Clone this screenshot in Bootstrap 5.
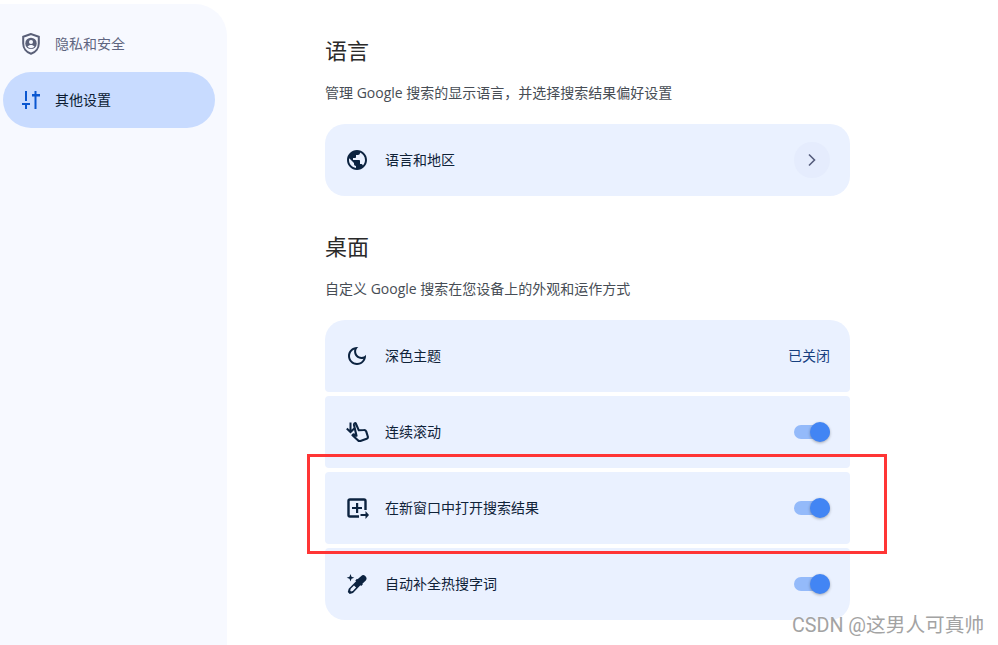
<!DOCTYPE html>
<html lang="zh-CN">
<head>
  <meta charset="UTF-8">
  <meta name="viewport" content="width=device-width, initial-scale=1.0">
  <title>搜索设置</title>
  <link href="https://cdn.jsdelivr.net/npm/bootstrap@5.3.3/dist/css/bootstrap.min.css" rel="stylesheet">
  <style>
    html, body { height: 100%; }
    body {
      font-family: Roboto, "Noto Sans CJK SC", sans-serif;
      font-size: 14px;
      background: #fff;
      color: #1f1f1f;
      overflow: hidden;
    }
    .page-wrap { height: 645px; }
    .side-panel {
      width: 227px;
      margin-top: 4px;
      padding: 12px 12px 0 3px;
      background: #f7f9ff;
      border-top-right-radius: 32px;
    }
    .side-item {
      height: 56px;
      padding-left: 17px;
      gap: 13px;
      border-radius: 28px;
      color: #5f6580;
    }
    .side-item.on { background: #c8dbff; color: #0b1b33; }
    .main-col {
      width: 525px;
      margin-left: 98px;
      padding-top: 37px;
      gap: 37px;
    }
    .sec-title { font-size: 22px; line-height: 30px; font-weight: 400; margin: 0; color: #2a2a2a; }
    .sec-desc {
      font-family: "Open Sans", "Noto Sans CJK SC", sans-serif;
      font-size: 14px;
      line-height: 20px;
      margin: 16px 0 21px;
      color: #474d55;
    }
    .set-row {
      height: 72px;
      padding: 0 20px;
      gap: 16px;
      background: #eaf1ff;
      border-radius: 4px;
      color: #0f2238;
    }
    .set-row.top-end { border-top-left-radius: 20px; border-top-right-radius: 20px; }
    .set-row.bottom-end { border-bottom-left-radius: 20px; border-bottom-right-radius: 20px; }
    .row-stack { gap: 4px; }
    .row-icon { width: 24px; height: 24px; flex: none; fill: #0c2340; }
    .go-btn {
      width: 36px;
      height: 36px;
      border-radius: 50%;
      background: #e5ecfd;
    }
    .state-text { color: #17407f; }
    .switch-track {
      position: relative;
      display: block;
      width: 36px;
      height: 14px;
      border-radius: 7px;
      background: #94bafa;
    }
    .switch-track::after {
      content: "";
      position: absolute;
      right: 0;
      top: -3px;
      width: 20px;
      height: 20px;
      border-radius: 50%;
      background: #4285f4;
      box-shadow: 0 1px 3px rgba(0, 0, 0, .3);
    }
    .red-box {
      position: absolute;
      left: 307px;
      top: 454px;
      width: 580px;
      height: 100px;
      border: 3px solid #ff3535;
      pointer-events: none;
    }
    .watermark {
      position: absolute;
      left: 792px;
      top: 613px;
      font-size: 19.7px;
      line-height: 26px;
      white-space: nowrap;
      color: #a3a3a3;
      text-shadow: 0 0 2px #fff;
    }
  </style>
</head>
<body>
  <div class="page-wrap d-flex position-relative">
    <!-- Sidebar -->
    <nav class="side-panel flex-shrink-0">
      <div class="side-item d-flex align-items-center">
        <svg width="22" height="24" viewBox="0 0 22 24"><path d="M11 2 3.200 4.800v6.700c0 4.800 3.200 8.900 7.800 10.300 4.600-1.400 7.800-5.500 7.800-10.300V4.800z" fill="none" stroke="#5a6078" stroke-width="2"/><circle cx="11" cy="11.400" r="5.700" fill="#5a6078"/><circle cx="11" cy="9.900" r="2" fill="#f7f9ff"/><path d="M7.500 14.800c.8-1.300 2.100-1.900 3.500-1.900s2.700.6 3.500 1.900c-.9.900-2.200 1.400-3.500 1.400s-2.600-.5-3.500-1.400z" fill="#f7f9ff"/></svg>
        <span>隐私和安全</span>
      </div>
      <div class="side-item on d-flex align-items-center">
        <svg width="22" height="24" viewBox="0 0 22 24" fill="#0b57d0"><path d="M5 3h2v10H5zM2 15h8v2H2zM5 17h2v4H5zM14.500 3h2v18h-2zM12 6h8v2.500h-8z"/></svg>
        <span>其他设置</span>
      </div>
    </nav>

    <!-- Settings -->
    <main class="main-col d-flex flex-column">
      <section class="lang-sec">
        <h2 class="sec-title">语言</h2>
        <p class="sec-desc">管理 Google 搜索的显示语言，并选择搜索结果偏好设置</p>
        <div class="set-row top-end bottom-end d-flex align-items-center">
          <svg class="row-icon" viewBox="0 0 24 24"><path d="M12 2C6.480 2 2 6.480 2 12s4.480 10 10 10 10-4.480 10-10S17.520 2 12 2zm-1 17.930c-3.950-.49-7-3.850-7-7.930 0-.62.08-1.210.21-1.790L9 15v1c0 1.100.9 2 2 2v1.930zm6.900-2.540c-.26-.81-1-1.390-1.900-1.390h-1v-3c0-.55-.45-1-1-1H8v-2h2c.55 0 1-.45 1-1V7h2c1.100 0 2-.9 2-2v-.41c2.930 1.190 5 4.060 5 7.410 0 2.080-.8 3.970-2.100 5.390z"/></svg>
          <span class="flex-grow-1">语言和地区</span>
          <span class="go-btn d-flex align-items-center justify-content-center">
            <svg width="12" height="14" viewBox="0 0 12 14"><path d="M3 1.500 8.500 7 3 12.500" fill="none" stroke="#555c7c" stroke-width="1.600"/></svg>
          </span>
        </div>
      </section>

      <section class="desk-sec">
        <h2 class="sec-title">桌面</h2>
        <p class="sec-desc">自定义 Google 搜索在您设备上的外观和运作方式</p>
        <div class="row-stack d-flex flex-column">
          <div class="set-row top-end d-flex align-items-center">
            <svg class="row-icon" viewBox="0 0 24 24"><path d="M9.370 5.510C9.190 6.150 9.100 6.820 9.100 7.500c0 4.080 3.320 7.400 7.400 7.400.68 0 1.350-.09 1.990-.27C17.450 17.190 14.930 19 12 19c-3.860 0-7-3.140-7-7 0-2.930 1.810-5.450 4.370-6.490zM12 3c-4.970 0-9 4.030-9 9s4.030 9 9 9 9-4.030 9-9c0-.46-.04-.92-.1-1.360-.98 1.370-2.580 2.260-4.400 2.260-2.980 0-5.400-2.420-5.400-5.400 0-1.810.89-3.420 2.260-4.400-.44-.06-.9-.1-1.360-.1z"/></svg>
            <span class="flex-grow-1">深色主题</span>
            <span class="state-text">已关闭</span>
          </div>
          <div class="set-row d-flex align-items-center">
            <svg class="row-icon" viewBox="0 0 24 24"><path d="M5.500 2.500v9.500M1.800 8.500 5.500 12.200 9.200 8.500" fill="none" stroke="#0c2340" stroke-width="2"/><path d="M10.800 3.500l3 6.800 5-.3c1.200-.1 2 .4 2.400 1.400l1.600 5.100c.3 1-.1 1.800-1.100 2.200l-6.300 2.200c-1 .3-1.800.1-2.500-.7L7.500 15.200l1-1 3 1.500L9 5c-.2-1.300 1.300-2.400 1.800-1.500z" fill="none" stroke="#0c2340" stroke-width="2.100" stroke-linejoin="round"/></svg>
            <span class="flex-grow-1">连续滚动</span>
            <span class="switch-track"></span>
          </div>
          <div class="set-row d-flex align-items-center">
            <svg class="row-icon" viewBox="0 0 24 24"><path d="M14 20.500H5A1.500 1.500 0 0 1 3.500 19V5A1.500 1.500 0 0 1 5 3.500h14A1.500 1.500 0 0 1 20.500 5v9" fill="none" stroke="#0c2340" stroke-width="2.400"/><path d="M11 7h2.200v3.900H17v2.200h-3.800V17H11v-3.900H7v-2.200h4zM15.500 18h5v-3l3.500 4-3.500 4v-3h-5z"/></svg>
            <span class="flex-grow-1">在新窗口中打开搜索结果</span>
            <span class="switch-track"></span>
          </div>
          <div class="set-row bottom-end d-flex align-items-center">
            <svg class="row-icon" viewBox="0 0 24 24"><path d="M5.500 2l1 2.800 2.800 1-2.800 1-1 2.800-1-2.800-2.800-1 2.800-1zM16.300 3.900c1-1 2.600-1.100 3.700-.1l.9.900c1 1.100.9 2.700-.1 3.700l-3.400 3.400.5.500-1.700 1.700-.8-.8L8 21l-3.300.9L2.800 20l.9-3.300 7.400-7.400-.8-.8 1.700-1.700.5.500zM9 13.500 5.700 16.800l-.5 1.800.8.800 1.800-.5 3.300-3.300z"/></svg>
            <span class="flex-grow-1">自动补全热搜字词</span>
            <span class="switch-track"></span>
          </div>
        </div>
      </section>
    </main>

    <div class="red-box"></div>
    <div class="watermark">CSDN @这男人可真帅</div>
  </div>

  <script src="https://cdn.jsdelivr.net/npm/bootstrap@5.3.3/dist/js/bootstrap.bundle.min.js"></script>
</body>
</html>
